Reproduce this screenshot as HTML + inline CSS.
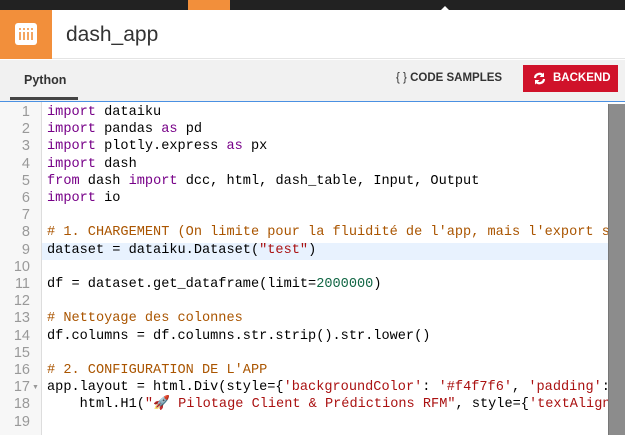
<!DOCTYPE html>
<html><head><style>
*{margin:0;padding:0;box-sizing:border-box}
body{width:625px;height:434px;overflow:hidden;background:#fff;font-family:"Liberation Sans",sans-serif;position:relative}
.top{position:absolute;left:0;top:0;width:625px;height:10px;background:#222}
.top .o{position:absolute;left:188px;top:0;width:42px;height:10px;background:#f28f3b}
.top .t{position:absolute;top:6px;width:0;height:0;border-left:4px solid transparent;border-right:4px solid transparent;border-bottom:4px solid #fff}
.hdr{position:absolute;left:0;top:10px;width:625px;height:49px;background:#fff;border-bottom:1px solid #e4e4e4}
.logo{position:absolute;left:0;top:0;width:52px;height:49px;background:#f28f3b}
.logo .b{position:absolute;left:15px;top:13px;width:22px;height:22px;background:#fff;border-radius:3px}
.title{position:absolute;left:66px;top:13px;font-size:21px;color:#333}
.tabs{position:absolute;left:0;top:60px;width:625px;height:41px;background:#f1f1f1}
.py{position:absolute;left:24px;top:13px;font-size:12.5px;font-weight:bold;color:#333}
.ul{position:absolute;left:10px;top:37px;width:68px;height:3px;background:#444}
.cs{position:absolute;left:396px;top:12px;font-size:11.5px;font-weight:bold;color:#333}
.be{position:absolute;left:523px;top:5px;width:95px;height:27px;background:#d0122a;color:#fff;font-size:11.5px;font-weight:bold;padding:7px 0 0 30px}
.ed{position:absolute;left:0;top:101px;width:625px;height:333px;border-top:1px solid #4a90e2;background:#fff}
.gut{position:absolute;left:0;top:0;width:42px;height:333px;background:#f7f7f7;border-right:1px solid #ddd}
.hl{position:absolute;left:42px;top:141px;width:566px;height:17px;background:#e8f2fe}
.code{position:absolute;left:0;top:2px;font-family:"Liberation Mono",monospace;font-size:13.6px;line-height:17.2px;white-space:pre}
.ln{position:absolute;left:0;top:0;width:30px;text-align:right;color:#999;font-family:"Liberation Sans",sans-serif;font-size:14.5px}
.c{position:absolute;left:47px;top:0;color:#000}
.k{color:#708}.m{color:#a50}.s{color:#a11}.n{color:#164}
.sb{position:absolute;left:608px;top:2px;width:17px;height:331px;background:#8c8c8c;border-left:1px solid #777}
</style></head><body>
<div class="top"><div class="o"></div><div class="t" style="left:441px"></div></div>
<div class="hdr"><div class="logo"><div class="b"><svg width="22" height="22"><g stroke="#f28f3b" stroke-width="1.6"><line x1="5" y1="9" x2="5" y2="17"/><line x1="9" y1="9" x2="9" y2="17"/><line x1="13" y1="9" x2="13" y2="17"/><line x1="17" y1="9" x2="17" y2="17"/></g><g fill="#f28f3b"><circle cx="5" cy="6" r="1"/><circle cx="9" cy="6" r="1"/><circle cx="13" cy="6" r="1"/><circle cx="17" cy="6" r="1"/></g></svg></div></div><div class="title">dash_app</div></div>
<div class="tabs"><div class="py">Python</div><div class="ul"></div><div class="cs"><span style="font-weight:normal">{ }</span> CODE SAMPLES</div>
<div class="be"><svg style="position:absolute;left:10px;top:7px" width="13" height="13" viewBox="0 0 13 13"><path d="M2 6a4.5 4.5 0 0 1 8-2.5M11 7a4.5 4.5 0 0 1-8 2.5" stroke="#fff" stroke-width="2.2" fill="none"/><path d="M11 0.5v4.5h-4.5zM2 12.5v-4.5h4.5z" fill="#fff"/></svg>BACKEND</div></div>
<div class="ed"><div class="gut"></div><div class="hl"></div>
<div class="code"><div class="ln">1
2
3
4
5
6
7
8
9
10
11
12
13
14
15
16
17
18
19</div><div class="c"><span class="k">import</span> dataiku
<span class="k">import</span> pandas <span class="k">as</span> pd
<span class="k">import</span> plotly.express <span class="k">as</span> px
<span class="k">import</span> dash
<span class="k">from</span> dash <span class="k">import</span> dcc, html, dash_table, Input, Output
<span class="k">import</span> io

<span class="m"># 1. CHARGEMENT (On limite pour la fluidité de l'app, mais l'export s</span>
dataset = dataiku.Dataset(<span class="s">"test"</span>)

df = dataset.get_dataframe(limit=<span class="n">2000000</span>)

<span class="m"># Nettoyage des colonnes</span>
df.columns = df.columns.str.strip().str.lower()

<span class="m"># 2. CONFIGURATION DE L'APP</span>
app.layout = html.Div(style={<span class="s">'backgroundColor'</span>: <span class="s">'#f4f7f6'</span>, <span class="s">'padding'</span>:
    html.H1(<span class="s">"🚀 Pilotage Client &amp; Prédictions RFM"</span>, style={<span class="s">'textAlign</span></div></div>
<div style="position:absolute;left:32px;top:282px;font-size:7px;color:#999">▼</div>
<div class="sb"></div>
</div>
</body></html>
